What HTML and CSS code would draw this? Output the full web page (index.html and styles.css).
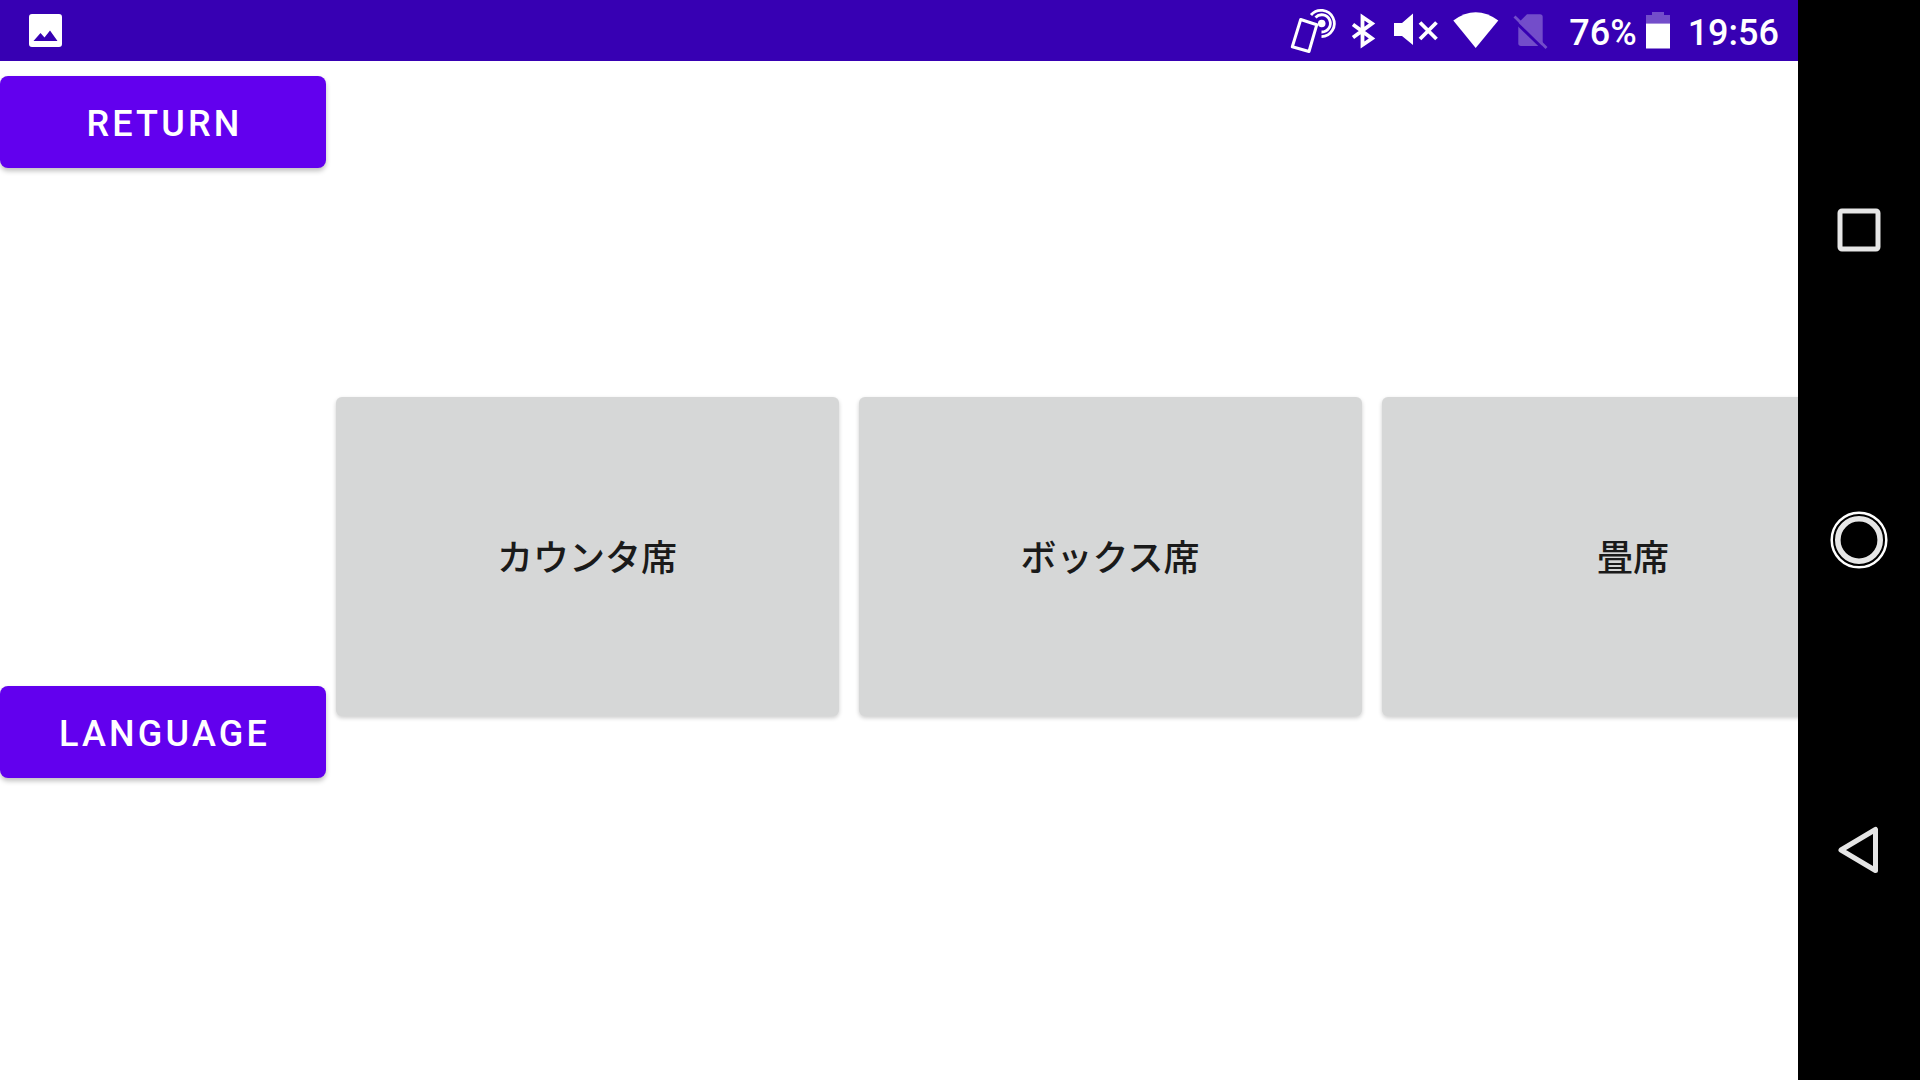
FILE: index.html
```html
<!DOCTYPE html>
<html lang="ja">
<head>
    <meta charset="UTF-8">
    <title>座席選択</title>
    <link rel="stylesheet" href="styles.css">
</head>
<body>

<div class="device">
    <div class="screen">
        <!-- status bar -->
        <div class="status-bar">
            <svg class="notify-icon" viewBox="0 0 33 33">
                <path d="M3 0H30A3 3 0 0 1 33 3V30A3 3 0 0 1 30 33H3A3 3 0 0 1 0 30V3A3 3 0 0 1 3 0ZM4.500 27H28.500L21 16.500L15.500 23.500L11.500 19Z" fill="#fff" fill-rule="evenodd"/>
            </svg>
            <div class="status-right">
                <svg class="st-icon" width="60" height="61" viewBox="6 0 60 61">
                    <path d="M20.700 19.500L36.800 24.700L29 51.500L12.300 46.800Z" fill="none" stroke="#fff" stroke-width="3" stroke-linejoin="round"/>
                    <circle cx="41.700" cy="23.500" r="3.800" fill="#fff"/>
                    <path d="M35.500 17.500A8.600 8.600 0 1 1 41.500 32" fill="none" stroke="#fff" stroke-width="2.800"/>
                    <path d="M31 15A13.200 13.200 0 1 1 41.500 36.700" fill="none" stroke="#fff" stroke-width="2.800"/>
                </svg>
                <svg class="st-icon" width="32" height="61" viewBox="66 0 32 61">
                    <path d="M73 24.500L92 38.500L82.500 45V17L92 23.500L73 37.500" fill="none" stroke="#fff" stroke-width="3.800"/>
                </svg>
                <svg class="st-icon" width="62" height="61" viewBox="98 0 62 61">
                    <path d="M114 23H122L133 13.500V45L122 36H114Z" fill="#fff"/>
                    <path d="M140 22.500L156.500 39M156.500 22.500L140 39" stroke="#fff" stroke-width="3.800" fill="none"/>
                </svg>
                <svg class="st-icon" width="60" height="61" viewBox="0 0 60 61">
                    <path d="M13.300 20.500Q35.700 4 58.300 20.500L35.700 48Z" fill="#fff"/>
                </svg>
                <svg class="st-icon" width="50" height="61" viewBox="60 0 50 61">
                    <path d="M87 14.300H100A2.700 2.700 0 0 1 102.700 17V43.300A2.700 2.700 0 0 1 100 46H81A2.700 2.700 0 0 1 78.300 43.300V23Z" fill="#734dca"/>
                    <path d="M72.500 19L104.500 50" stroke="#3700b3" stroke-width="3"/>
                    <path d="M74.500 16.500L106.500 48" stroke="#734dca" stroke-width="2.800"/>
                </svg>
                <span class="st-text st-percent">76%</span>
                <svg class="st-battery" width="24" height="37" viewBox="0 0 24 37">
                    <path d="M6 0H18V3H24V11.500H0V3H6Z" fill="#734dca"/>
                    <rect y="11.500" width="24" height="25" fill="#fff"/>
                </svg>
                <span class="st-text st-time">19:56</span>
            </div>
        </div>

        <div class="content">
            <div class="side">
                <button class="side-btn">RETURN</button>
                <button class="side-btn">LANGUAGE</button>
            </div>
            <div class="cards">
                <div class="seat-card">カウンタ席</div>
                <div class="seat-card">ボックス席</div>
                <div class="seat-card">畳席</div>
            </div>
        </div>
    </div>

    <!-- navigation bar -->
    <div class="nav-bar">
        <svg class="nav-icon" viewBox="0 0 80 80">
            <rect x="21" y="21" width="38" height="38" rx="2" fill="none" stroke="#e6e6e6" stroke-width="5"/>
        </svg>
        <svg class="nav-icon" viewBox="0 0 80 80">
            <circle cx="40" cy="40" r="27.300" fill="none" stroke="#fff" stroke-width="2.500"/>
            <circle cx="40" cy="40" r="21.200" fill="none" stroke="#e6e6e6" stroke-width="5.600"/>
        </svg>
        <svg class="nav-icon" viewBox="0 0 80 80">
            <path d="M22 40L56.500 19.500V60.500Z" fill="none" stroke="#e6e6e6" stroke-width="5" stroke-linejoin="round"/>
        </svg>
    </div>
</div>

</body>
</html>
```

FILE: styles.css
```css
* {
    box-sizing: border-box;
}
html, body {
    margin: 0;
    height: 100%;
    overflow: hidden;
}
body {
    font-family: Roboto, "Noto Sans CJK JP", sans-serif;
    background-color: #000;
}
.device {
    display: flex;
    width: 1920px;
    height: 1080px;
}
.screen {
    width: 1798px;
    height: 1080px;
    background-color: #fff;
    overflow: hidden;
}

/* status bar */
.status-bar {
    display: flex;
    align-items: center;
    height: 61px;
    padding: 0 19px 0 29px;
    background-color: #3700b3;
    color: #fff;
}
.notify-icon {
    width: 33px;
    height: 33px;
    margin-top: -1px;
}
.status-right {
    display: flex;
    align-items: center;
    margin-left: auto;
}
.st-icon {
    display: block;
}
.st-text {
    padding-top: 5px;
    font-size: 36px;
    font-weight: 500;
    line-height: 61px;
}
.st-percent {
    margin-left: 19px;
}
.st-battery {
    margin-left: 9px;
    margin-top: -1px;
}
.st-time {
    margin-left: 18px;
}

/* content */
.content {
    display: flex;
}
.side {
    display: flex;
    flex-direction: column;
    gap: 518px;
    flex-shrink: 0;
    width: 326px;
    padding-top: 15px;
}
.side-btn {
    width: 326px;
    height: 92px;
    padding: 4px 0 0 3px;
    border: none;
    border-radius: 8px;
    background-color: #6200ee;
    color: #fff;
    font-family: Roboto, sans-serif;
    font-size: 36px;
    font-weight: 500;
    letter-spacing: 3.200px;
    box-shadow: 0 3px 5px rgba(0, 0, 0, 0.25);
}
.cards {
    display: flex;
    gap: 20px;
    margin: 336px 0 0 10px;
}
.seat-card {
    display: flex;
    align-items: center;
    justify-content: center;
    flex-shrink: 0;
    width: 503px;
    height: 319px;
    padding: 0 1px 3px 0;
    border-radius: 6px;
    background-color: #d6d7d7;
    color: #1a1a1a;
    font-family: "Noto Sans CJK JP", sans-serif;
    font-size: 36px;
    font-weight: 500;
    box-shadow: 0 2px 4px rgba(0, 0, 0, 0.2);
}

/* navigation bar */
.nav-bar {
    display: flex;
    flex-direction: column;
    align-items: center;
    gap: 230px;
    width: 122px;
    padding-top: 190px;
}
.nav-icon {
    display: block;
    width: 80px;
    height: 80px;
}
```
